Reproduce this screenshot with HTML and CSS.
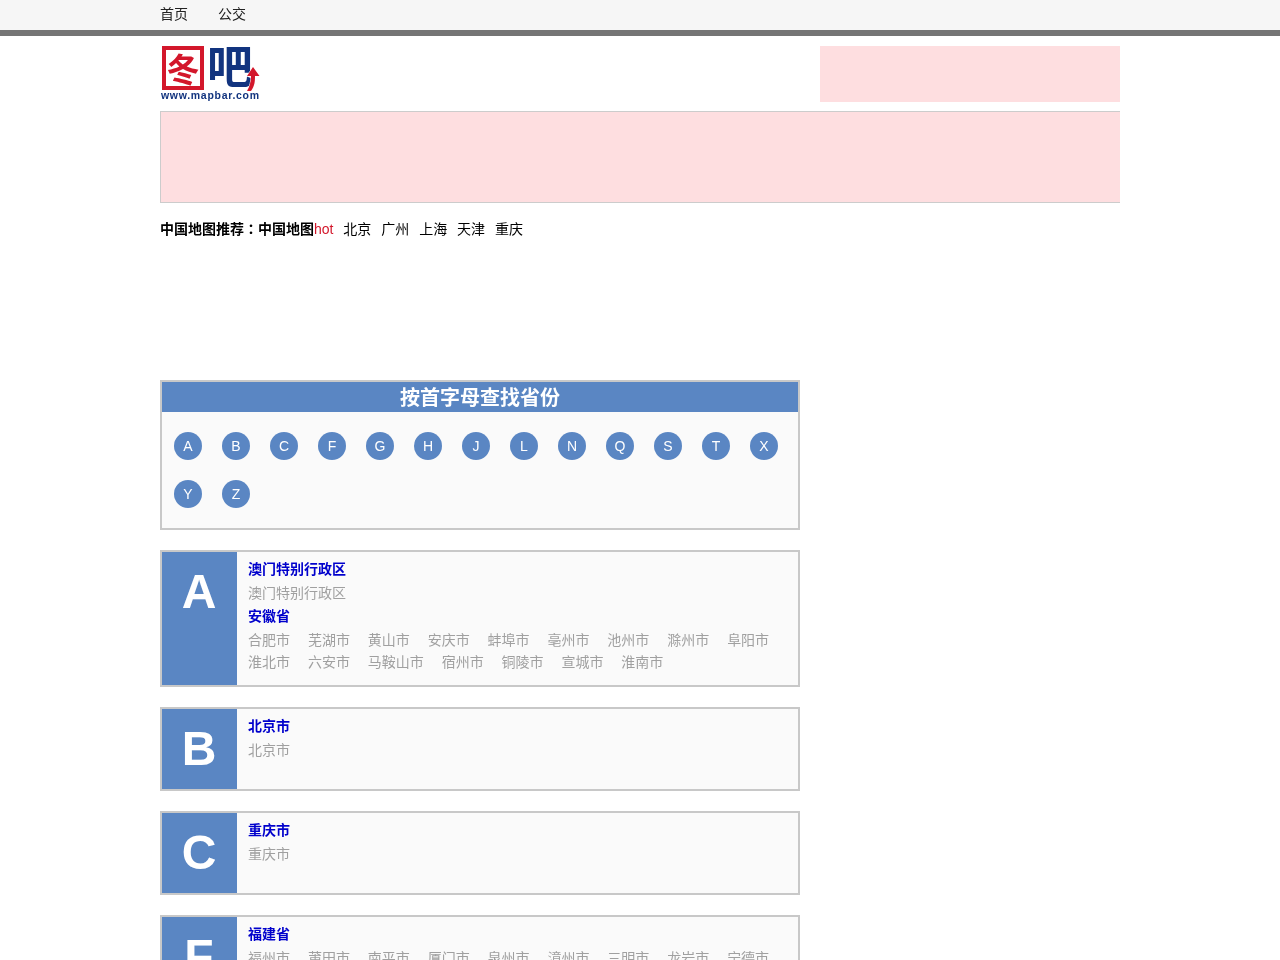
FILE: index.html
```html
<!DOCTYPE html>
<html>
<head>
  <meta charset="UTF-8" />
  <title>中国地图</title>
  <link rel="stylesheet" href="styles.css">
</head>
<body>
  <div class="topbar">
    <div class="wrap topnav">
      <a href="#">首页</a>
      <a href="#">公交</a>
    </div>
  </div>

  <div class="wrap">
    <div class="header">
      <a href="#" class="logo">
        <svg width="100" height="58" viewBox="0 0 100 58">
          <rect x="4" y="4" width="38" height="40" fill="none" stroke="#d3172b" stroke-width="4"/>
          <text x="23" y="38" class="logo-tu">冬</text>
          <text x="47" y="39" class="logo-ba">吧</text>
          <path d="M91 47 C95 42 95 36 95 32 L99.500 32 L93 23 L87 32 L91 32 C91 37 90 42 87 47 Z" fill="#d3172b" stroke="#fff" stroke-width="1" paint-order="stroke"/>
          <text x="1" y="55" class="logo-url">www.mapbar.com</text>
        </svg>
      </a>
      <div class="ad-small"></div>
    </div>
    <div class="ad-large"></div>

    <div class="recommend">
      <b>中国地图推荐<span class="colon">：</span>中国地图</b><a href="#" class="hot">hot</a>
      <a href="#">北京</a>
      <a href="#">广州</a>
      <a href="#">上海</a>
      <a href="#">天津</a>
      <a href="#">重庆</a>
    </div>

    <div class="letters">
      <h2>按首字母查找省份</h2>
      <div class="letter-list">
        <a href="#">A</a>
        <a href="#">B</a>
        <a href="#">C</a>
        <a href="#">F</a>
        <a href="#">G</a>
        <a href="#">H</a>
        <a href="#">J</a>
        <a href="#">L</a>
        <a href="#">N</a>
        <a href="#">Q</a>
        <a href="#">S</a>
        <a href="#">T</a>
        <a href="#">X</a>
        <a href="#">Y</a>
        <a href="#">Z</a>
      </div>
    </div>

    <div class="section">
      <div class="section-letter">A</div>
      <div class="section-body">
        <a href="#" class="prov">澳门特别行政区</a>
        <div class="cities">
          <a href="#">澳门特别行政区</a>
        </div>
        <a href="#" class="prov">安徽省</a>
        <div class="cities">
          <a href="#">合肥市</a>
          <a href="#">芜湖市</a>
          <a href="#">黄山市</a>
          <a href="#">安庆市</a>
          <a href="#">蚌埠市</a>
          <a href="#">亳州市</a>
          <a href="#">池州市</a>
          <a href="#">滁州市</a>
          <a href="#">阜阳市</a>
          <a href="#">淮北市</a>
          <a href="#">六安市</a>
          <a href="#">马鞍山市</a>
          <a href="#">宿州市</a>
          <a href="#">铜陵市</a>
          <a href="#">宣城市</a>
          <a href="#">淮南市</a>
        </div>
      </div>
    </div>

    <div class="section">
      <div class="section-letter">B</div>
      <div class="section-body">
        <a href="#" class="prov">北京市</a>
        <div class="cities">
          <a href="#">北京市</a>
        </div>
      </div>
    </div>

    <div class="section">
      <div class="section-letter">C</div>
      <div class="section-body">
        <a href="#" class="prov">重庆市</a>
        <div class="cities">
          <a href="#">重庆市</a>
        </div>
      </div>
    </div>

    <div class="section">
      <div class="section-letter">F</div>
      <div class="section-body">
        <a href="#" class="prov">福建省</a>
        <div class="cities">
          <a href="#">福州市</a>
          <a href="#">莆田市</a>
          <a href="#">南平市</a>
          <a href="#">厦门市</a>
          <a href="#">泉州市</a>
          <a href="#">漳州市</a>
          <a href="#">三明市</a>
          <a href="#">龙岩市</a>
          <a href="#">宁德市</a>
        </div>
      </div>
    </div>
  </div>
</body>
</html>
```

FILE: styles.css
```css
body {
  margin: 0;
  font-family: "Liberation Sans", "Noto Sans CJK SC", sans-serif;
  font-size: 14px;
  color: #000;
  background: #fff;
}
a {
  color: inherit;
  text-decoration: none;
}
.wrap {
  width: 960px;
  margin: 0 auto;
  will-change: opacity;
}
.topbar {
  height: 30px;
  background: #f6f6f6;
  border-bottom: 6px solid #757575;
}
.topnav {
  display: flex;
  gap: 30px;
  line-height: 29px;
  color: #222;
}
.header {
  display: flex;
  justify-content: space-between;
  height: 75px;
}
.logo {
  display: block;
  height: 58px;
  margin-top: 8px;
}
.logo svg {
  overflow: visible;
}
.logo-tu {
  font-size: 33px;
  font-weight: bold;
  fill: #d3172b;
  text-anchor: middle;
}
.logo-ba {
  font-size: 46px;
  font-weight: bold;
  fill: #12347f;
}
.logo-url {
  font-size: 10.500px;
  font-weight: bold;
  letter-spacing: 0.700px;
  fill: #12347f;
}
.ad-small {
  width: 300px;
  height: 56px;
  margin-top: 10px;
  background: #fedee0;
}
.ad-large {
  height: 90px;
  background: #fedee0;
  border-top: 1px solid #ccc;
  border-bottom: 1px solid #ccc;
  border-left: 1px solid #ccc;
}
.recommend {
  margin-top: 14px;
  height: 163px;
  line-height: 22px;
}
.recommend a {
  margin-right: 6px;
}
.recommend .hot {
  color: #d3172b;
}
.colon {
  font-family: "Noto Sans CJK JP", sans-serif;
}
.letters {
  width: 636px;
  background: #fafafa;
  border: 2px solid #c8c8c8;
}
.letters h2 {
  margin: 0;
  height: 30px;
  line-height: 32px;
  font-size: 20px;
  text-align: center;
  color: #fff;
  background: #5a86c3;
}
.letter-list {
  display: flex;
  flex-wrap: wrap;
  gap: 20px;
  padding: 20px 12px;
}
.letter-list a {
  width: 28px;
  height: 28px;
  line-height: 28px;
  border-radius: 50%;
  text-align: center;
  color: #fff;
  background: #5a86c3;
}
.section {
  display: flex;
  width: 636px;
  margin-top: 20px;
  background: #fafafa;
  border: 2px solid #c8c8c8;
}
.section-letter {
  width: 74px;
  padding-right: 1px;
  flex-shrink: 0;
  padding-top: 12px;
  font-size: 48px;
  line-height: 56px;
  font-weight: bold;
  text-align: center;
  color: #fff;
  background: #5a86c3;
}
.section-body {
  flex: 1;
  min-height: 63px;
  padding: 6px 11px 11px;
}
.prov {
  display: block;
  line-height: 22px;
  font-weight: bold;
  color: #0000cc;
}
.cities {
  margin: 2px 0 1px;
  line-height: 22px;
  color: #a0a0a0;
}
.cities a {
  margin-right: 14px;
}
```
